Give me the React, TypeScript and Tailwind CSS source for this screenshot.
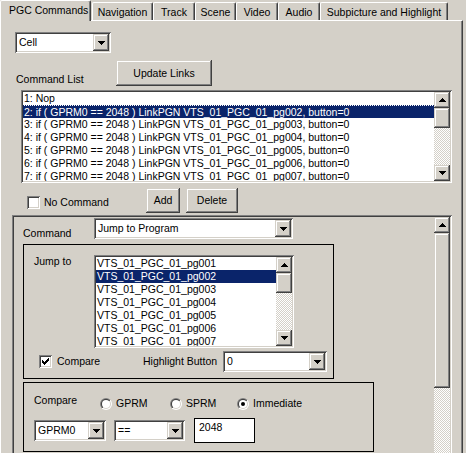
import React from "react";

const RAISED =
  "shadow-[inset_-1px_-1px_#404040,inset_1px_1px_#d4d0c8,inset_-2px_-2px_#808080,inset_2px_2px_#ffffff]";
const SUNKEN =
  "shadow-[inset_1px_1px_#808080,inset_-1px_-1px_#ffffff,inset_2px_2px_#404040,inset_-2px_-2px_#d4d0c8]";
const CHECKER =
  "bg-[image:repeating-conic-gradient(#ffffff_0%_25%,#d4d0c8_0%_50%)] bg-[length:2px_2px]";

function Arrow({ up }: { up?: boolean }) {
  return (
    <svg width="7" height="4" viewBox="0 0 7 4" shapeRendering="crispEdges" className="block">
      <path
        d={
          up
            ? "M3 0H4V1H5V2H6V3H7V4H0V3H1V2H2V1H3Z"
            : "M0 0H7V1H6V2H5V3H4V4H3V3H2V2H1V1H0Z"
        }
        fill="#000"
      />
    </svg>
  );
}

function Button({ className, children }: { className: string; children: React.ReactNode }) {
  return (
    <div className={`${RAISED} bg-[#d4d0c8] flex items-center justify-center shrink-0 ${className}`}>
      {children}
    </div>
  );
}

function Combo({ className, value }: { className: string; value: string }) {
  return (
    <div className={`${SUNKEN} bg-white p-[2px] flex h-[21px] shrink-0 ${className}`}>
      <div className="flex-1 min-w-0 pl-[2px] flex items-center whitespace-nowrap overflow-hidden">
        {value}
      </div>
      <div className={`w-[16px] h-full ${RAISED} bg-[#d4d0c8] flex items-center justify-center`}>
        <Arrow />
      </div>
    </div>
  );
}

function ScrollBar({ thumb, down = true }: { thumb: string; down?: boolean }) {
  return (
    <div className="w-[16px] h-full flex flex-col shrink-0">
      <div className={`h-[16px] shrink-0 ${RAISED} bg-[#d4d0c8] flex items-center justify-center`}>
        <Arrow up />
      </div>
      <div className={`${thumb} shrink-0 ${RAISED} bg-[#d4d0c8]`} />
      <div className={`flex-1 ${CHECKER}`} />
      {down && (
        <div className={`h-[16px] shrink-0 ${RAISED} bg-[#d4d0c8] flex items-center justify-center`}>
          <Arrow />
        </div>
      )}
    </div>
  );
}

function ListBox({
  className,
  items,
  selected,
  focus,
}: {
  className: string;
  items: string[];
  selected: number;
  focus?: boolean;
}) {
  return (
    <div className={`${SUNKEN} bg-white p-[2px] flex shrink-0 ${className}`}>
      <div className="flex-1 min-w-0 overflow-hidden">
        {items.map((t, i) =>
          i === selected ? (
            <div
              key={i}
              className={
                focus
                  ? "h-[13px] leading-[12px] pl-[1px] whitespace-nowrap bg-[#0a246a] text-white border-t border-dotted border-[#0a246a] bg-clip-padding"
                  : "h-[13px] pl-[1px] whitespace-nowrap bg-[#0a246a] text-white"
              }
            >
              {t}
            </div>
          ) : (
            <div key={i} className="h-[13px] pl-[1px] whitespace-nowrap">
              {t}
            </div>
          )
        )}
      </div>
      <ScrollBar thumb="h-[20px]" />
    </div>
  );
}

const CHECK_TOPS = [2, 3, 4, 3, 2, 1, 0];

function Checkbox({ checked }: { checked?: boolean }) {
  return (
    <div className={`w-[13px] h-[13px] ${SUNKEN} bg-white shrink-0 relative`}>
      {checked && (
        <svg
          className="absolute left-0 top-0"
          width="13"
          height="13"
          viewBox="0 0 13 13"
          shapeRendering="crispEdges"
        >
          {CHECK_TOPS.map((t, j) => (
            <rect key={j} x={3 + j} y={3 + t} width="1" height="3" fill="#000" />
          ))}
        </svg>
      )}
    </div>
  );
}

function Radio({
  id,
  label,
  checked,
  className,
}: {
  id: string;
  label: string;
  checked?: boolean;
  className: string;
}) {
  return (
    <div className={`flex items-center shrink-0 ${className}`}>
      <svg width="12" height="12" viewBox="0 0 12 12" className="shrink-0 block">
        <defs>
          <linearGradient id={`${id}o`} x1="0" y1="0" x2="1" y2="1">
            <stop offset="0.5" stopColor="#808080" />
            <stop offset="0.5" stopColor="#ffffff" />
          </linearGradient>
          <linearGradient id={`${id}i`} x1="0" y1="0" x2="1" y2="1">
            <stop offset="0.5" stopColor="#404040" />
            <stop offset="0.5" stopColor="#d4d0c8" />
          </linearGradient>
        </defs>
        <circle cx="6" cy="6" r="6" fill={`url(#${id}o)`} />
        <circle cx="6" cy="6" r="5" fill={`url(#${id}i)`} />
        <circle cx="6" cy="6" r="4" fill="#ffffff" />
        {checked && <circle cx="6" cy="6" r="2" fill="#000000" />}
      </svg>
      <span className="ml-[4px] whitespace-nowrap">{label}</span>
    </div>
  );
}

function Tab({ className, active, children }: { className: string; active?: boolean; children: React.ReactNode }) {
  if (active) {
    return (
      <div
        className={`relative z-10 h-[21px] -mb-px bg-[#d4d0c8] border-l border-t border-white border-r border-r-[#404040] shadow-[inset_-1px_0_#808080] rounded-t-[2px] pl-[8px] pt-[3px] whitespace-nowrap shrink-0 ${className}`}
      >
        {children}
      </div>
    );
  }
  return (
    <div
      className={`h-[18px] border-l border-t border-white border-r border-r-[#404040] shadow-[inset_-1px_0_#808080] rounded-t-[2px] pt-[3px] flex justify-center whitespace-nowrap shrink-0 ${className}`}
    >
      {children}
    </div>
  );
}

const CMDS = [
  "1: Nop",
  "2: if ( GPRM0 == 2048 ) LinkPGN VTS_01_PGC_01_pg002, button=0",
  "3: if ( GPRM0 == 2048 ) LinkPGN VTS_01_PGC_01_pg003, button=0",
  "4: if ( GPRM0 == 2048 ) LinkPGN VTS_01_PGC_01_pg004, button=0",
  "5: if ( GPRM0 == 2048 ) LinkPGN VTS_01_PGC_01_pg005, button=0",
  "6: if ( GPRM0 == 2048 ) LinkPGN VTS_01_PGC_01_pg006, button=0",
  "7: if ( GPRM0 == 2048 ) LinkPGN VTS_01_PGC_01_pg007, button=0",
];

const PGS = [
  "VTS_01_PGC_01_pg001",
  "VTS_01_PGC_01_pg002",
  "VTS_01_PGC_01_pg003",
  "VTS_01_PGC_01_pg004",
  "VTS_01_PGC_01_pg005",
  "VTS_01_PGC_01_pg006",
  "VTS_01_PGC_01_pg007",
];

export default function App() {
  return (
    <div className="w-[466px] h-[453px] overflow-hidden bg-[#d4d0c8] font-['Liberation_Sans',Arial,sans-serif] text-[10.5px] leading-[13px] text-black select-none">
      {/* tab strip */}
      <div className="flex items-end h-[20px]">
        <Tab active className="w-[91px]">
          PGC Commands
        </Tab>
        <Tab className="ml-[1px] w-[61px]">Navigation</Tab>
        <Tab className="w-[42px]">Track</Tab>
        <Tab className="w-[41px]">Scene</Tab>
        <Tab className="w-[42px]">Video</Tab>
        <Tab className="w-[42px]">Audio</Tab>
        <Tab className="w-[128px]">Subpicture and Highlight</Tab>
      </div>

      {/* tab page */}
      <div className="w-[463px] h-[433px] border-t border-l border-white border-r border-r-[#404040] shadow-[inset_-1px_0_#808080]">
        <Combo className="ml-[14px] mt-[11px] w-[96px]" value="Cell" />

        <div className="flex items-end mt-[7px]">
          <div className="ml-[15px] w-[100px] whitespace-nowrap">Command List</div>
          <Button className="w-[96px] h-[26px]">Update Links</Button>
        </div>

        <ListBox className="ml-[20px] mt-[4px] w-[431px] h-[93px]" items={CMDS} selected={1} focus />

        <div className="flex items-start mt-[5px]">
          <div className="ml-[26px] mt-[8px] w-[119px] flex items-center shrink-0">
            <Checkbox />
            <span className="ml-[4px] whitespace-nowrap">No Command</span>
          </div>
          <Button className="w-[34px] h-[25px]">Add</Button>
          <Button className="ml-[6px] w-[52px] h-[25px]">Delete</Button>
        </div>

        {/* scrolling command editor */}
        <div className={`ml-[11px] mt-[2px] w-[440px] h-[260px] ${SUNKEN} p-[2px] flex`}>
          <div className="flex-1 min-w-0">
            <div className="flex items-start mt-[1px]">
              <div className="ml-[9px] mt-[9px] w-[71px] shrink-0">Command</div>
              <Combo className="w-[199px]" value="Jump to Program" />
            </div>

            <div className="ml-[9px] mt-[4px] w-[311px] h-[135px] border border-black">
              <div className="flex items-start mt-[10px]">
                <div className="ml-[10px] w-[60px] shrink-0">Jump to</div>
                <ListBox className="w-[200px] h-[93px]" items={PGS} selected={1} />
              </div>
              <div className="flex items-center mt-[3px] h-[21px]">
                <div className="ml-[15px] w-[104px] flex items-center shrink-0">
                  <Checkbox checked />
                  <span className="ml-[5px]">Compare</span>
                </div>
                <div className="w-[80px] shrink-0 whitespace-nowrap">Highlight Button</div>
                <Combo className="w-[104px]" value="0" />
              </div>
            </div>

            <div className="ml-[9px] mt-[3px] w-[351px] h-[70px] border border-black">
              <div className="flex items-start">
                <div className="ml-[10px] mt-[11px] w-[66px] shrink-0">Compare</div>
                <Radio id="rg" className="mt-[14px] w-[70px]" label="GPRM" />
                <Radio id="rs" className="mt-[14px] w-[67px]" label="SPRM" />
                <Radio id="ri" className="mt-[14px]" label="Immediate" checked />
              </div>
              <div className="flex items-start mt-[8px]">
                <Combo className="ml-[10px] mt-[2px] w-[72px]" value="GPRM0" />
                <Combo className="ml-[8px] mt-[2px] w-[71px]" value="==" />
                <div className="ml-[9px] w-[61px] h-[25px] border border-black bg-white pl-[4px] pt-[2px] shrink-0">
                  2048
                </div>
              </div>
            </div>
          </div>
          <ScrollBar thumb="h-[155px]" down={false} />
        </div>
      </div>
    </div>
  );
}
